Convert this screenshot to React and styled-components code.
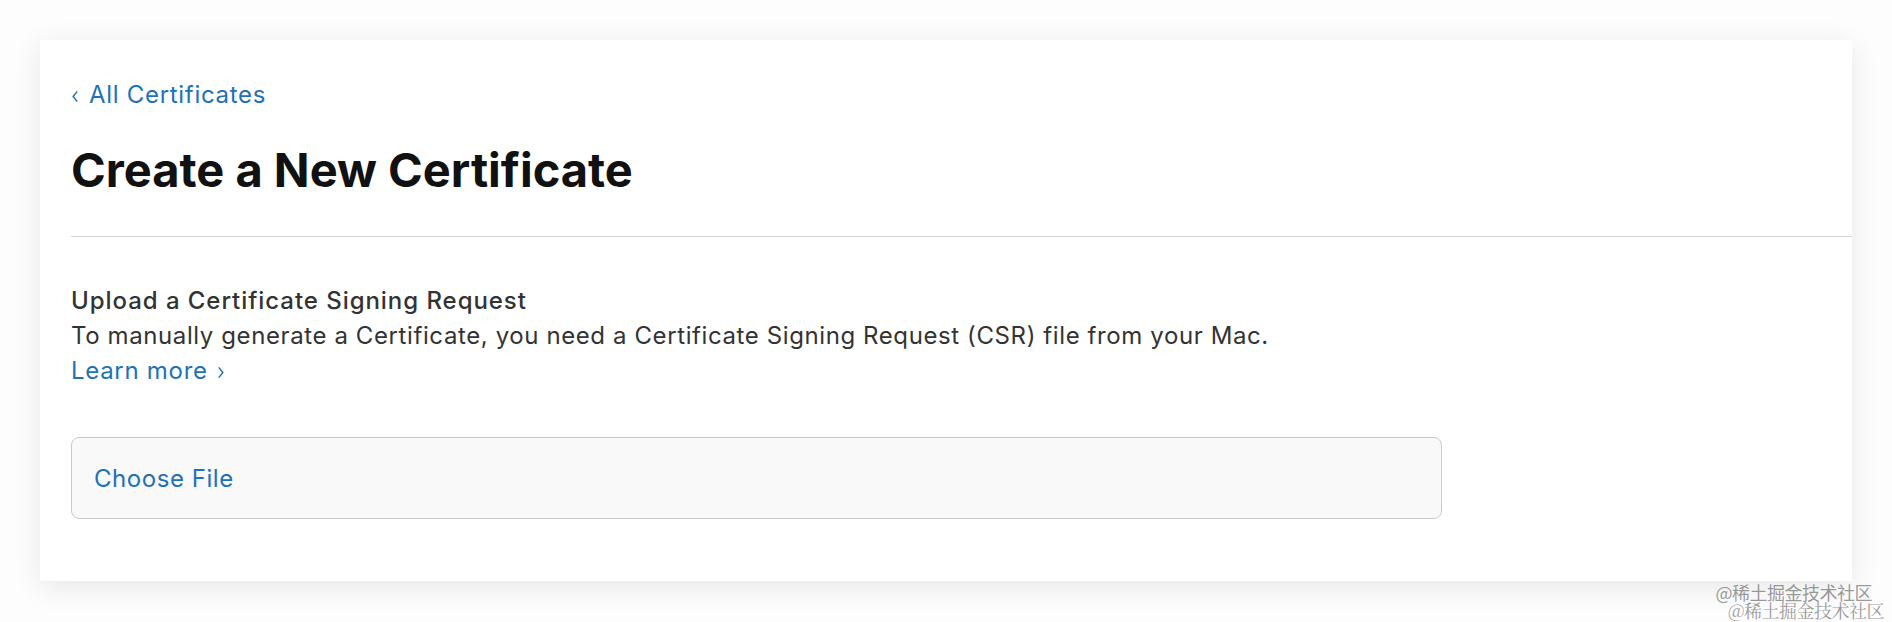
import styled, { createGlobalStyle } from "styled-components";

const GlobalStyle = createGlobalStyle`
    html, body {
        margin: 0;
        padding: 0;
        background: #fdfdfd;
        font-family: Inter, "Noto Sans", "Liberation Sans", sans-serif;
        -webkit-font-smoothing: antialiased;
    }
    * { box-sizing: border-box; }
`;

const Page = styled.div`
    position: relative;
    width: 1892px;
    height: 622px;
    padding: 40px 40px 0 40px;
    overflow: hidden;
`;

const Card = styled.div`
    background: #fff;
    box-shadow: 0 6px 28px rgba(0, 0, 0, 0.09);
    padding: 37px 0 62px 31px;
`;

const Header = styled.div`
    padding-bottom: 38px;
    border-bottom: 1px solid #d6d6d9;
`;

const BackLink = styled.a`
    display: inline-flex;
    align-items: center;
    gap: 10px;
    font-size: 24px;
    line-height: 35px;
    letter-spacing: 0.7px;
    color: #2171b5;
    text-decoration: none;
    cursor: pointer;
    svg {
        width: 8px;
        height: 13px;
        margin-top: 3px;
    }
`;

const Title = styled.h1`
    margin: 30px 0 0;
    font-size: 47px;
    line-height: 56px;
    font-weight: 700;
    letter-spacing: 0;
    color: #111;
`;

const Section = styled.div`
    padding-top: 46px;
    padding-right: 40px;
`;

const SectionTitle = styled.h2`
    margin: 0;
    font-size: 24px;
    line-height: 35px;
    font-weight: 500;
    letter-spacing: 0.95px;
    color: #333;
`;

const Text = styled.p`
    margin: 0;
    font-size: 24px;
    line-height: 35px;
    letter-spacing: 0.6px;
    color: #333;
`;

const MoreLink = styled.a`
    display: inline-flex;
    align-items: center;
    gap: 9px;
    font-size: 24px;
    line-height: 35px;
    letter-spacing: 0.7px;
    color: #2171b5;
    cursor: pointer;
    svg {
        width: 8px;
        height: 13px;
        margin-top: 3px;
    }
`;

const FileBox = styled.label`
    display: flex;
    align-items: center;
    width: 1371px;
    height: 82px;
    margin-top: 49px;
    padding-left: 22px;
    background: #f9f9f9;
    border: 1.5px solid #c9c9c9;
    border-radius: 8px;
    font-size: 24px;
    line-height: 35px;
    letter-spacing: 0.55px;
    color: #2171b5;
    cursor: pointer;
    input { display: none; }
`;

const Watermark = styled.div`
    position: absolute;
    right: ${(p) => p.$right}px;
    bottom: ${(p) => p.$bottom}px;
    font-family: ${(p) => (p.$serif ? '"Noto Serif CJK SC", "Noto Sans CJK SC", serif' : '"Noto Sans CJK SC", sans-serif')};
    font-size: 18px;
    line-height: 20px;
    color: rgba(120, 120, 120, 0.75);
    letter-spacing: -0.5px;
    pointer-events: none;
`;

const Chevron = ({ dir }) => (
    <svg viewBox="0 0 8 14" fill="none" stroke="currentColor" strokeWidth="1.6" strokeLinecap="round" strokeLinejoin="round">
        {dir === "left" ? <path d="M6 2 2 7l4 5" /> : <path d="M2 2l4 5-4 5" />}
    </svg>
);

const App = () => {
    return (
        <>
            <GlobalStyle />
            <Page>
                <Card>
                    <Header>
                        <BackLink><Chevron dir="left" />All Certificates</BackLink>
                        <Title>Create a New Certificate</Title>
                    </Header>
                    <Section>
                        <SectionTitle>Upload a Certificate Signing Request</SectionTitle>
                        <Text>To manually generate a Certificate, you need a Certificate Signing Request (CSR) file from your Mac.</Text>
                        <MoreLink>Learn more<Chevron dir="right" /></MoreLink>
                        <FileBox>
                            <input type="file" />
                            Choose File
                        </FileBox>
                    </Section>
                </Card>
                <Watermark $right={20} $bottom={20}>@稀土掘金技术社区</Watermark>
                <Watermark $right={8} $bottom={2} $serif>@稀土掘金技术社区</Watermark>
            </Page>
        </>
    );
};

export default App;
